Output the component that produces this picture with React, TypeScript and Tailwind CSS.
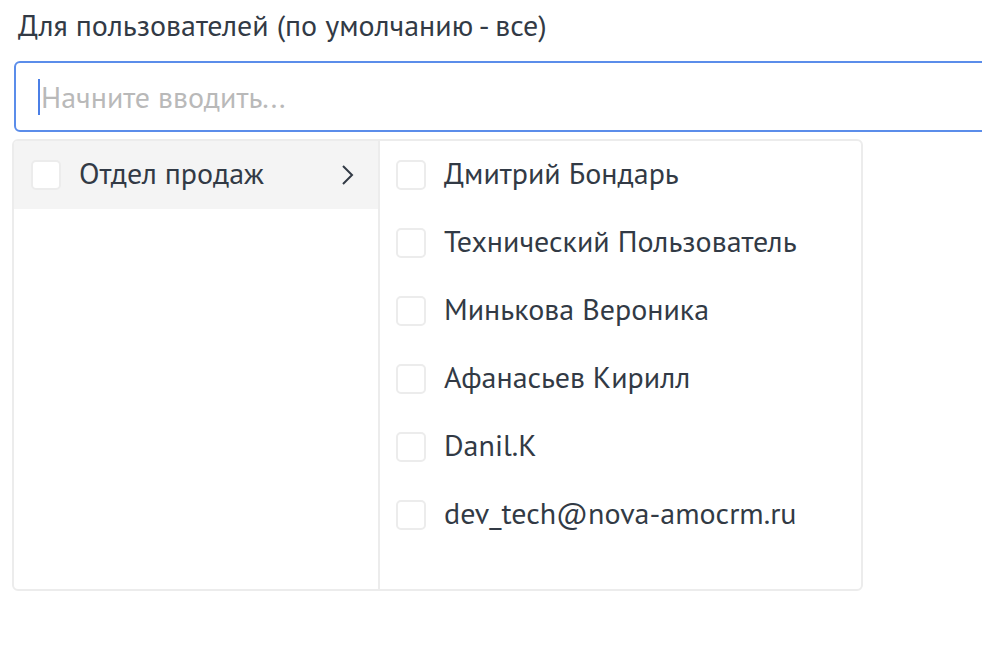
import React from 'react';

const users = [
  'Дмитрий Бондарь',
  'Технический Пользователь',
  'Минькова Вероника',
  'Афанасьев Кирилл',
  'Danil.K',
  'dev_tech@nova-amocrm.ru',
];

const Checkbox = () => (
  <span className="h-[30px] w-[30px] shrink-0 rounded-[5px] border-2 border-[#ececec] bg-white" />
);

export default function App() {
  return (
    <div
      className="h-[652px] w-[982px] overflow-hidden bg-white text-[#323a45]"
      style={{ fontFamily: '"PT Sans", "Noto Sans", "Open Sans", sans-serif' }}
    >
      <div className="pl-[18px] pt-[6px] text-[30px] leading-[38px]">
        Для пользователей (по умолчанию - все)
      </div>

      <div className="ml-[14px] mt-[17px] flex h-[71px] w-[990px] items-center rounded-[6px] border-2 border-[#5b8dea] pl-[22px]">
        <span className="mr-[1px] h-[36px] w-[2px] bg-[#4b7fe6]" />
        <input
          className="w-[600px] bg-transparent text-[30px] text-[#323a45] outline-none placeholder:text-[#b9b9b9]"
          placeholder="Начните вводить..."
          style={{ fontFamily: 'inherit' }}
        />
      </div>

      <div className="ml-[12px] mt-[7px] flex h-[452px] w-[851px] overflow-hidden rounded-[6px] border-2 border-[#ececec]">
        <div className="w-[366px] shrink-0 border-r-2 border-[#ececec]">
          <div className="flex h-[68px] items-center bg-[#f4f4f4] pl-[17px] pr-[24px]">
            <Checkbox />
            <span className="ml-[18px] flex-1 pb-[6px] text-[30px]">Отдел продаж</span>
            <svg width="13" height="22" viewBox="0 0 13 22" fill="none">
              <path d="M2 2l9 9-9 9" stroke="#323a45" strokeWidth="2" />
            </svg>
          </div>
        </div>
        <div className="flex-1">
          {users.map((u) => (
            <div key={u} className="flex h-[68px] items-center pl-[16px]">
              <Checkbox />
              <span className="ml-[18px] pb-[6px] text-[30px]">{u}</span>
            </div>
          ))}
        </div>
      </div>
    </div>
  );
}
